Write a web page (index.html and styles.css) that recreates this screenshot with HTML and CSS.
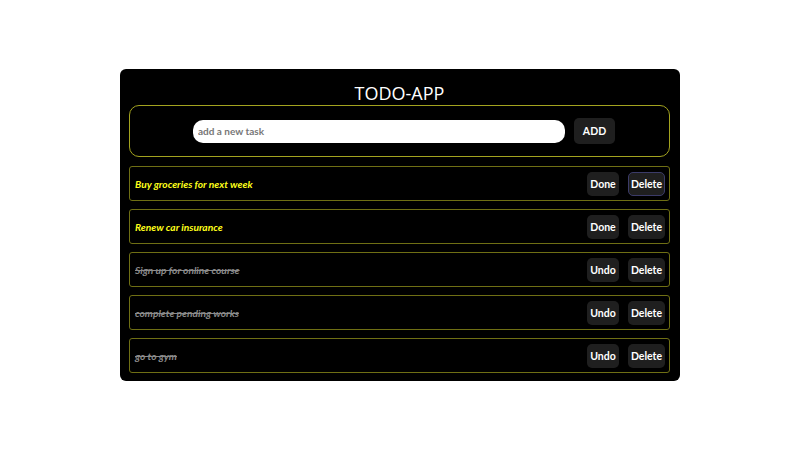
FILE: index.html
```html
<!DOCTYPE html>
<html lang="en">
<head>
<meta charset="utf-8">
<title>TODO-APP</title>
<link rel="stylesheet" href="styles.css">
</head>
<body>
<main class="app">
  <h1 class="title">TODO-APP</h1>
  <form class="add-form">
    <input class="task-input" type="text" placeholder="add a new task">
    <button type="button" class="btn btn-add">ADD</button>
  </form>
  <ul class="list">
    <li class="item">
      <span class="text">Buy groceries for next week</span>
      <div class="actions"><button class="btn btn-toggle">Done</button><button class="btn btn-delete btn-focus">Delete</button></div>
    </li>
    <li class="item">
      <span class="text">Renew car insurance</span>
      <div class="actions"><button class="btn btn-toggle">Done</button><button class="btn btn-delete">Delete</button></div>
    </li>
    <li class="item done">
      <span class="text">Sign up for online course</span>
      <div class="actions"><button class="btn btn-toggle">Undo</button><button class="btn btn-delete">Delete</button></div>
    </li>
    <li class="item done">
      <span class="text">complete pending works</span>
      <div class="actions"><button class="btn btn-toggle">Undo</button><button class="btn btn-delete">Delete</button></div>
    </li>
    <li class="item done">
      <span class="text">go to gym</span>
      <div class="actions"><button class="btn btn-toggle">Undo</button><button class="btn btn-delete">Delete</button></div>
    </li>
  </ul>
</main>
</body>
</html>
```
FILE: styles.css
```css
* { box-sizing: border-box; }
html, body { margin: 0; padding: 0; background: #fff; }
body {
  font-family: Lato, "Noto Sans", sans-serif;
  padding-top: 69px;
}
.app {
  width: 560px;
  margin: 0 auto;
  background: #000;
  border-radius: 6px;
  padding: 0 10px 8px 9px;
}
.title {
  margin: 0;
  padding-top: 12px;
  height: 36px;
  font-family: "Open Sans", "Noto Sans", sans-serif;
  font-size: 18px;
  line-height: 24px;
  font-weight: 400;
  color: #fff;
  text-align: center;
}
.add-form {
  height: 52px;
  border: 1px solid #a3a31f;
  border-radius: 10px;
  display: flex;
  align-items: center;
  justify-content: center;
  gap: 9px;
  padding-left: 9px;
  margin: 0;
}
.task-input {
  width: 372px;
  height: 23px;
  border: none;
  border-radius: 10px;
  background: #fff;
  padding: 0 5px;
  font-family: inherit;
  font-size: 10px;
  font-weight: 700;
  outline: none;
}
.task-input::placeholder { color: #777; }
.btn {
  background: #1f1f1f;
  color: #fff;
  border: 1px solid transparent;
  border-radius: 5px;
  font-family: inherit;
  font-size: 10.5px;
  font-weight: 700;
  height: 24px;
  padding: 0;
  cursor: pointer;
}
.btn-add { width: 41px; height: 26px; }
.btn-toggle { width: 32px; }
.btn-delete { width: 37px; }
.btn-focus { border-color: #3b3b68; }
.list {
  list-style: none;
  margin: 9px 0 0;
  padding: 0;
  display: flex;
  flex-direction: column;
  gap: 8px;
}
.item {
  height: 35px;
  border: 1px solid #6f6f14;
  border-radius: 3px;
  display: flex;
  align-items: center;
  justify-content: space-between;
  padding: 0 4px 0 5px;
}
.text {
  color: #ffff1a;
  font-size: 10.2px;
  font-weight: 700;
  font-style: italic;
}
.item.done .text {
  color: #8a8a8a;
  text-decoration: line-through;
}
.actions { display: flex; gap: 9px; }
```
